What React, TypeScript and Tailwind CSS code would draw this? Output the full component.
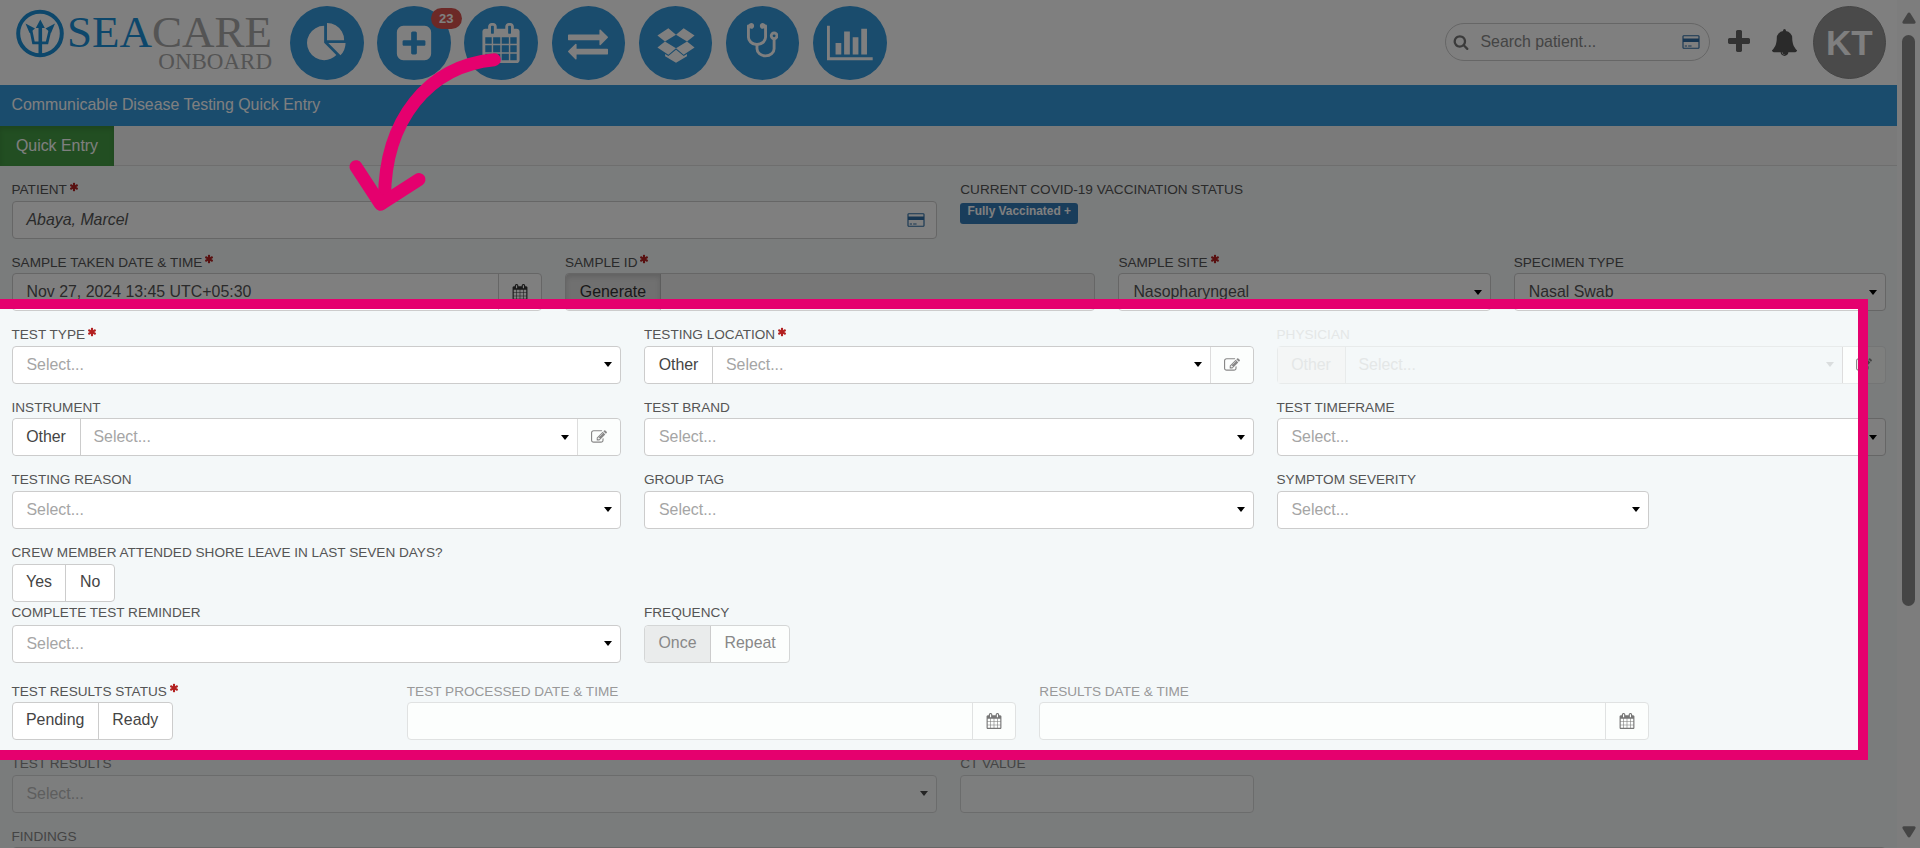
import { ReactNode } from "react";
import clsx from "clsx";

const icons = {
  pie: "M768 890l546 546q-106 108-247.5 168t-298.5 60q-209 0-385.5-103t-279.5-279.5-103-385.5 103-385.5 279.5-279.5 385.5-103v762zm187 6h773q0 157-60 298.5t-168 247.5zm709-128h-768v-768q209 0 385.5 103t279.5 279.5 103 385.5z",
  plusSquare:
    "M1408 960v-128q0-26-19-45t-45-19h-320v-320q0-26-19-45t-45-19h-128q-26 0-45 19t-19 45v320h-320q-26 0-45 19t-19 45v128q0 26 19 45t45 19h320v320q0 26 19 45t45 19h128q26 0 45-19t19-45v-320h320q26 0 45-19t19-45zm256-544v960q0 119-84.5 203.5t-203.5 84.5h-960q-119 0-203.5-84.5t-84.5-203.5v-960q0-119 84.5-203.5t203.5-84.5h960q119 0 203.5 84.5t84.5 203.5z",
  calendar:
    "M192 1664h288v-288h-288v288zm352 0h320v-288h-320v288zm-352-352h288v-320h-288v320zm352 0h320v-320h-320v320zm-352-384h288v-288h-288v288zm736 736h320v-288h-320v288zm-384-736h320v-288h-320v288zm768 736h288v-288h-288v288zm-384-352h320v-320h-320v320zm-352-864v-288q0-13-9.5-22.5t-22.5-9.5h-64q-13 0-22.5 9.5t-9.5 22.5v288q0 13 9.5 22.5t22.5 9.5h64q13 0 22.5-9.5t9.5-22.5zm736 864h288v-320h-288v320zm-384-384h320v-288h-320v288zm384 0h288v-288h-288v288zm32-480v-288q0-13-9.5-22.5t-22.5-9.5h-64q-13 0-22.5 9.5t-9.5 22.5v288q0 13 9.5 22.5t22.5 9.5h64q13 0 22.5-9.5t9.5-22.5zm384-64v1280q0 52-38 90t-90 38h-1408q-52 0-90-38t-38-90v-1280q0-52 38-90t90-38h128v-96q0-66 47-113t113-47h64q66 0 113 47t47 113v96h384v-96q0-66 47-113t113-47h64q66 0 113 47t47 113v96h128q52 0 90 38t38 90z",
  exchange:
    "M1792 1184v192q0 13-9.5 22.5t-22.5 9.5h-1376v192q0 13-9.5 22.5t-22.5 9.5q-12 0-24-10l-319-320q-9-9-9-22 0-14 9-23l320-320q9-9 23-9 13 0 22.5 9.5t9.5 22.5v192h1376q13 0 22.5 9.5t9.5 22.5zm0-544q0 14-9 23l-320 320q-9 9-23 9-13 0-22.5-9.5t-9.5-22.5v-192h-1376q-13 0-22.5-9.5t-9.5-22.5v-192q0-13 9.5-22.5t22.5-9.5h1376v-192q0-14 9-23t23-9q12 0 24 10l319 319q9 9 9 23z",
  dropbox:
    "M402 829l494 305-342 285-490-319zm986 555v108l-490 293v1l-1-1-1 1v-1l-489-293v-108l147 96 342-284v-2l1 1 1-1v2l343 284zm-834-1146l342 285-494 304-338-270zm836 591l338 271-489 319-343-285zm-151-591l489 319-338 270-494-304z",
  stethoscope:
    "M1344 576q0-26-19-45t-45-19-45 19-19 45 19 45 45 19 45-19 19-45zm128 0q0 62-35.5 111t-92.5 70v395q0 159-131.5 271.5t-316.5 112.5-316.5-112.5-131.5-271.5v-132q-164-20-274-128t-110-252v-512q0-26 19-45t45-19q6 0 16 2 17-30 47-48t65-18q53 0 90.5 37.5t37.5 90.5-37.5 90.5-90.5 37.5q-33 0-64-18v402q0 106 94 181t226 75 226-75 94-181v-402q-31 18-64 18-53 0-90.5-37.5t-37.5-90.5 37.5-90.5 90.5-37.5q35 0 65 18t47 48q10-2 16-2 26 0 45 19t19 45v512q0 144-110 252t-274 128v132q0 106 94 181t226 75 226-75 94-181v-395q-57-21-92.5-70t-35.5-111q0-80 56-136t136-56 136 56 56 136z",
  chart:
    "M640 896v512h-256v-512h256zm384-512v1024h-256v-1024h256zm1024 1152v128h-2048v-1536h128v1408h1920zm-640-896v768h-256v-768h256zm384-384v1152h-256v-1152h256z",
  card: "M1760 128q66 0 113 47t47 113v1216q0 66-47 113t-113 47h-1600q-66 0-113-47t-47-113v-1216q0-66 47-113t113-47h1600zm-1600 128q-13 0-22.5 9.5t-9.5 22.5v224h1664v-224q0-13-9.5-22.5t-22.5-9.5h-1600zm1600 1280q13 0 22.5-9.5t9.5-22.5v-608h-1664v608q0 13 9.5 22.5t22.5 9.5h1600zm-1504-128v-128h256v128h-256zm384 0v-128h384v128h-384z",
  bell: "M912 1696q0-16-16-16-59 0-101.5-42.5t-42.5-101.5q0-16-16-16t-16 16q0 73 51.5 124.5t124.5 51.5q16 0 16-16zm816-288q0 52-38 90t-90 38h-448q0 106-75 181t-181 75-181-75-75-181h-448q-52 0-90-38t-38-90q50-42 91-88t85-119.5 74.5-158.5 50-206 19.5-260q0-152 117-282.5t307-158.5q-8-19-8-39 0-40 28-68t68-28 68 28 28 68q0 20-8 39 190 28 307 158.5t117 282.5q0 139 19.5 260t50 206 74.5 158.5 85 119.5 91 88z",
  search:
    "M1216 832q0-185-131.5-316.5t-316.5-131.5-316.5 131.5-131.5 316.5 131.5 316.5 316.5 131.5 316.5-131.5 131.5-316.5zm512 832q0 52-38 90t-90 38q-54 0-90-38l-343-342q-179 124-399 124-143 0-273.5-55.5t-225-150-150-225-55.5-273.5 55.5-273.5 150-225 225-150 273.5-55.5 273.5 55.5 225 150 150 225 55.5 273.5q0 220-124 399l343 343q37 37 37 90z",
  plus: "M1600 736v192q0 40-28 68t-68 28h-416v416q0 40-28 68t-68 28h-192q-40 0-68-28t-28-68v-416h-416q-40 0-68-28t-28-68v-192q0-40 28-68t68-28h416v-416q0-40 28-68t68-28h192q40 0 68 28t28 68v416h416q40 0 68 28t28 68z",
  asterisk:
    "M1546 1050q46 26 59.5 77.5t-12.5 97.5l-64 110q-26 46-77.5 59.5t-97.5-12.5l-266-153v307q0 52-38 90t-90 38h-128q-52 0-90-38t-38-90v-307l-266 153q-46 26-97.5 12.5t-77.5-59.5l-64-110q-26-46-12.5-97.5t59.5-77.5l266-154-266-154q-46-26-59.5-77.5t12.5-97.5l64-110q26-46 77.5-59.5t97.5 12.5l266 153v-307q0-52 38-90t90-38h128q52 0 90 38t38 90v307l266-153q46-26 97.5-12.5t77.5 59.5l64 110q26 46 12.5 97.5t-59.5 77.5l-266 154z",
  edit: "M888 1184l116-116-152-152-116 116v56h96v96h56zm440-720q-16-16-33 1l-350 350q-17 17-1 33t33-1l350-350q17-17 1-33zm80 594v190q0 119-84.5 203.5t-203.5 84.5h-832q-119 0-203.5-84.5t-84.5-203.5v-832q0-119 84.5-203.5t203.5-84.5h832q63 0 117 25 15 7 18 23 3 17-9 29l-49 49q-14 14-32 8-23-6-45-6h-832q-66 0-113 47t-47 113v832q0 66 47 113t113 47h832q66 0 113-47t47-113v-126q0-13 9-22l64-64q15-15 35-7t20 29zm-96-738l288 288-672 672h-288v-288zm444 132l-92 92-288-288 92-92q28-28 68-28t68 28l152 152q28 28 28 68t-28 68z",
};

type IconProps = { name: keyof typeof icons; box?: string; className?: string };

const Icon = ({ name, box = "0 0 1792 1792", className }: IconProps) => (
  <svg viewBox={box} fill="currentColor" className={clsx("shrink-0", className)}>
    <path d={icons[name]} />
  </svg>
);

const Card = ({ className }: { className?: string }) => (
  <Icon name="card" box="0 0 1920 1792" className={clsx("h-4 w-[18px] text-[#2e6da4]", className)} />
);

const Caret = () => (
  <svg viewBox="0 0 8 5" className="w-2 h-[5px] shrink-0 fill-black">
    <path d="M0 0h8L4 5z" />
  </svg>
);

const Logo = () => (
  <div className="flex w-[260px] pl-4 pt-[9px]">
    <svg viewBox="0 0 48 49" className="w-12 h-[49px] shrink-0 text-[#1b8fd6]">
      <circle cx="24" cy="24.500" r="21.800" fill="none" stroke="currentColor" strokeWidth="4" />
      <path d="M24.300 46V16" fill="none" stroke="currentColor" strokeWidth="3.600" />
      <path d="M14.500 19l3 14.800h13.500l3.500-14.800" fill="none" stroke="currentColor" strokeWidth="2.800" />
      <path
        d="M24.300 10.500l4.500 8.500h-9zM9.500 14.500l9.500 5-5.500 4.500zM39 14.500l-9.500 5 5.500 4.500z"
        fill="currentColor"
      />
    </svg>
    <div className="pl-[3px] font-['Liberation_Serif',serif] text-right text-[#a8a8a8]">
      <div className="text-[45px] leading-[41px] mt-[3px]">
        <span className="text-[#1b8fd6]">SEA</span>CARE
      </div>
      <div className="text-[23px] leading-5 -mt-[1px]">ONBOARD</div>
    </div>
  </div>
);

const NavButton = ({ children }: { children: ReactNode }) => (
  <button className="relative flex size-[73.500px] items-center justify-center rounded-full bg-[#3498db] text-white">
    {children}
  </button>
);

type FieldProps = {
  label: string;
  span: string;
  required?: boolean;
  labelClass?: string;
  children?: ReactNode;
};

const Field = ({ label, span, required, labelClass = "h-[18.600px] text-[#555]", children }: FieldProps) => (
  <div className={clsx("min-w-0", span)}>
    <div className={clsx("flex items-center pb-[3px] text-[13.600px] leading-none whitespace-nowrap", labelClass)}>
      {label}
      {required && <Icon name="asterisk" className="mb-[6px] ml-[2px] size-[10px] text-[#b32020]" />}
    </div>
    {children}
  </div>
);

const boxStyle = "h-[38px] rounded border border-[#ccc] bg-white";

const Select = ({ value, disabled }: { value?: string; disabled?: boolean }) => (
  <div className={clsx(boxStyle, "flex items-center justify-between pl-3.5 pr-2", disabled && "opacity-70")}>
    <span className={value ? "text-[#555]" : "text-[#a5a5a5]"}>{value || "Select..."}</span>
    <Caret />
  </div>
);

// Select with the "Other" toggle in front and the edit button behind
const OtherSelect = ({ disabled }: { disabled?: boolean }) => (
  <div className={clsx("flex h-[38px] rounded border", disabled ? "border-[#e8ebeb]" : "border-[#ccc]")}>
    <div className={clsx("flex grow items-center", disabled ? "text-[#e4e7e7]" : "rounded-l bg-white")}>
      <span
        className={clsx(
          "flex h-full w-[68px] items-center justify-center border-r",
          disabled ? "border-[#e8ebeb] bg-[#f4f6f6]" : "border-[#ccc] text-[#444]"
        )}
      >
        Other
      </span>
      <span className={clsx("grow pl-[13px]", !disabled && "text-[#a5a5a5]")}>Select...</span>
      <span className={clsx("pr-2", disabled && "opacity-10")}>
        <Caret />
      </span>
    </div>
    <div className="flex w-[43px] items-center justify-center rounded-r border-l border-[#ddd] bg-[#fcfefd] text-[#888]">
      <Icon name="edit" className="size-4" />
    </div>
  </div>
);

const DateInput = ({ value, disabled }: { value?: string; disabled?: boolean }) => (
  <div
    className={clsx(
      "flex h-[38px] items-center rounded border",
      disabled ? "border-[#e0e2e2] bg-[#fcfefd]" : "border-[#ccc] bg-white"
    )}
  >
    <span className="grow pl-3.5 text-[15.900px] text-[#555]">{value}</span>
    <span
      className={clsx(
        "flex h-full w-[43px] items-center justify-center border-l",
        disabled ? "border-[#e0e2e2] text-[#777]" : "border-[#ccc] text-[#333]"
      )}
    >
      <Icon name="calendar" className="size-4" />
    </span>
  </div>
);

const Toggle = ({ options }: { options: string[] }) => (
  <div className={clsx(boxStyle, "inline-flex divide-x divide-[#ccc] align-top text-[#444]")}>
    {options.map((option) => (
      <button key={option} className="px-[13.500px] pb-0.5">
        {option}
      </button>
    ))}
  </div>
);

const Row = ({ className = "mb-4", children }: { className?: string; children: ReactNode }) => (
  <div className={clsx("grid grid-cols-24 gap-x-[23px]", className)}>{children}</div>
);

const App = () => {
  return (
    <div className="relative flex h-[848px] overflow-hidden bg-[#f4f8f9] font-['Liberation_Sans',Arial,sans-serif] text-[15.900px] leading-none">
      <div className="w-[1897px] shrink-0">
        {/* Header */}
        <header className="flex h-[84.500px] bg-white">
          <Logo />
          <nav className="ml-[30px] flex gap-[13.700px] pt-1.5">
            <NavButton>
              <Icon name="pie" className="size-10" />
            </NavButton>
            <NavButton>
              <Icon name="plusSquare" className="size-10" />
              <span className="absolute -right-[11px] top-[2px] flex h-[21px] w-[31px] items-center justify-center rounded-full bg-[#d9534f] text-[13px] font-bold">
                23
              </span>
            </NavButton>
            <NavButton>
              <Icon name="calendar" className="size-10" />
            </NavButton>
            <NavButton>
              <Icon name="exchange" className="size-10" />
            </NavButton>
            <NavButton>
              <Icon name="dropbox" className="size-10" />
            </NavButton>
            <NavButton>
              <Icon name="stethoscope" box="64 0 1408 1792" className="h-10 w-[31.400px]" />
            </NavButton>
            <NavButton>
              <Icon name="chart" box="0 0 2048 1792" className="h-10 w-[45.700px]" />
            </NavButton>
          </nav>
          <div className="ml-auto flex items-center pr-[11px]">
            <div className="flex h-[38px] w-[265px] items-center rounded-full border border-[#ccc] px-[7px]">
              <Icon name="search" className="size-4 text-[#777]" />
              <span className="grow pl-3 text-[#888]">Search patient...</span>
              <Card className="mr-0.5" />
            </div>
            <Icon name="plus" className="ml-[15px] size-7 text-[#666]" />
            <Icon name="bell" className="ml-[18px] size-[27px] text-[#555]" />
            <div className="ml-[15px] flex size-[73.500px] items-center justify-center rounded-full border border-[#888] bg-[#949494] text-[35px] font-bold text-white">
              KT
            </div>
          </div>
        </header>

        <div className="flex h-[41.500px] items-center bg-[#3498db] pb-px pl-[11.500px] text-[15.900px] text-white">
          Communicable Disease Testing Quick Entry
        </div>
        <div className="flex h-[40px] border-b border-[#ddd] bg-[#f5f5f5]">
          <div className="flex h-[40px] w-[114px] items-center justify-center bg-[#449d44] text-white shadow-[inset_0_3px_5px_rgba(0,0,0,.125)]">
            Quick Entry
          </div>
        </div>

        {/* Form */}
        <main className="pl-[11.500px] pr-[11px] pt-4">
          <Row>
            <Field label="PATIENT" span="col-span-12" required>
              <div className={clsx(boxStyle, "flex items-center justify-between pl-3.5 pr-[11px]")}>
                <i className="text-[#555]">Abaya, Marcel</i>
                <Card />
              </div>
            </Field>
            <Field label="CURRENT COVID-19 VACCINATION STATUS" span="col-span-12">
              <div className="mt-[2px] inline-flex h-[21px] w-[118px] items-center justify-center rounded-[3px] bg-[#337ab7] pb-0.5 text-[11.900px] font-bold text-white">
                Fully Vaccinated +
              </div>
            </Field>
          </Row>
          <Row>
            <Field label="SAMPLE TAKEN DATE & TIME" span="col-span-7" required>
              <DateInput value="Nov 27, 2024 13:45 UTC+05:30" />
            </Field>
            <Field label="SAMPLE ID" span="col-span-7" required>
              <div className="flex h-[38px] rounded border border-[#ccc] bg-[#eee]">
                <button className="w-[95px] rounded-l border-r border-[#bbb] bg-[#e0e0e0] text-[#333] shadow-[inset_0_3px_5px_rgba(0,0,0,.125)]">
                  Generate
                </button>
              </div>
            </Field>
            <Field label="SAMPLE SITE" span="col-span-5" required>
              <Select value="Nasopharyngeal" />
            </Field>
            <Field label="SPECIMEN TYPE" span="col-span-5">
              <Select value="Nasal Swab" />
            </Field>
          </Row>
          <Row>
            <Field label="TEST TYPE" span="col-span-8" required>
              <Select />
            </Field>
            <Field label="TESTING LOCATION" span="col-span-8" required>
              <OtherSelect />
            </Field>
            <Field label="PHYSICIAN" span="col-span-8" labelClass="h-[18.600px] text-[#e4e7e7]">
              <OtherSelect disabled />
            </Field>
          </Row>
          <Row>
            <Field label="INSTRUMENT" span="col-span-8">
              <OtherSelect />
            </Field>
            <Field label="TEST BRAND" span="col-span-8">
              <Select />
            </Field>
            <Field label="TEST TIMEFRAME" span="col-span-8">
              <Select />
            </Field>
          </Row>
          <Row>
            <Field label="TESTING REASON" span="col-span-8">
              <Select />
            </Field>
            <Field label="GROUP TAG" span="col-span-8">
              <Select />
            </Field>
            <Field label="SYMPTOM SEVERITY" span="col-span-5">
              <Select />
            </Field>
          </Row>
          <Row className="mb-[2.500px]">
            <Field label="CREW MEMBER ATTENDED SHORE LEAVE IN LAST SEVEN DAYS?" span="col-span-8">
              <Toggle options={["Yes", "No"]} />
            </Field>
          </Row>
          <Row className="mb-[21px]">
            <Field label="COMPLETE TEST REMINDER" span="col-span-8" labelClass="h-[20.600px] text-[#555]">
              <Select />
            </Field>
            <Field label="FREQUENCY" span="col-span-8" labelClass="h-[20.600px] text-[#555]">
              <div className="inline-flex h-[38px] rounded border border-[#d4d6d6] bg-[#fcfefd] text-[#888]">
                <button className="rounded-l border-r border-[#ccc] bg-[#eaecec] px-[13.500px] pb-0.5">Once</button>
                <button className="px-[13.500px] pb-0.5">Repeat</button>
              </div>
            </Field>
          </Row>
          <Row>
            <Field label="TEST RESULTS STATUS" span="col-span-5" required>
              <Toggle options={["Pending", "Ready"]} />
            </Field>
            <Field label="TEST PROCESSED DATE & TIME" span="col-span-8" labelClass="h-[18.600px] text-[#999]">
              <DateInput disabled />
            </Field>
            <Field label="RESULTS DATE & TIME" span="col-span-8" labelClass="h-[18.600px] text-[#999]">
              <DateInput disabled />
            </Field>
          </Row>
          <Row>
            <Field label="TEST RESULTS" span="col-span-12" labelClass="h-[18.600px] text-[#888]">
              <Select disabled />
            </Field>
            <Field label="CT VALUE" span="col-span-4" labelClass="h-[18.600px] text-[#888]">
              <div className={clsx(boxStyle, "opacity-70")} />
            </Field>
          </Row>
          <Row>
            <Field label="FINDINGS" span="col-span-24" labelClass="h-[18.600px] text-[#888]">
              <div className={boxStyle} />
            </Field>
          </Row>
        </main>
      </div>

      {/* Scrollbar */}
      <div className="flex grow flex-col items-center bg-[#fafafa] pt-3">
        <svg viewBox="0 0 14 12" className="h-3 w-3.5 fill-[#8b8b8b]">
          <path d="M7 0.500q.8 0 1.300.8l5 8q1 2-1 2.500H1.700q-2-.5-1-2.500l5-8q.5-.8 1.300-.8z" />
        </svg>
        <div className="mt-[11px] h-[571px] w-[13px] rounded-full bg-[#8b8b8b]" />
        <svg viewBox="0 0 14 12" className="mt-auto mb-[10px] h-3 w-3.5 fill-[#8b8b8b]">
          <path d="M7 11.500q.8 0 1.300-.8l5-8q1-2-1-2.500H1.700q-2 .5-1 2.500l5 8q.5.8 1.300.8z" />
        </svg>
      </div>

      {/* Tutorial spotlight */}
      <div className="absolute -left-[10px] top-[299px] h-[461px] w-[1878px] border-[10px] border-[#e5006e] shadow-[0_0_0_2000px_rgba(0,0,0,.5)]" />
      <svg
        viewBox="0 0 180 170"
        className="absolute left-[340px] top-[50px] h-[170px] w-[180px]"
        fill="none"
        stroke="#e5006e"
        strokeWidth="13"
        strokeLinecap="round"
        strokeLinejoin="round"
      >
        <path d="M154.300 9.700C88 16 45 70 44.500 148L42 153" />
        <path d="M16 116.700L40.500 154.300L79 129.500" />
      </svg>
    </div>
  );
};

export default App;
